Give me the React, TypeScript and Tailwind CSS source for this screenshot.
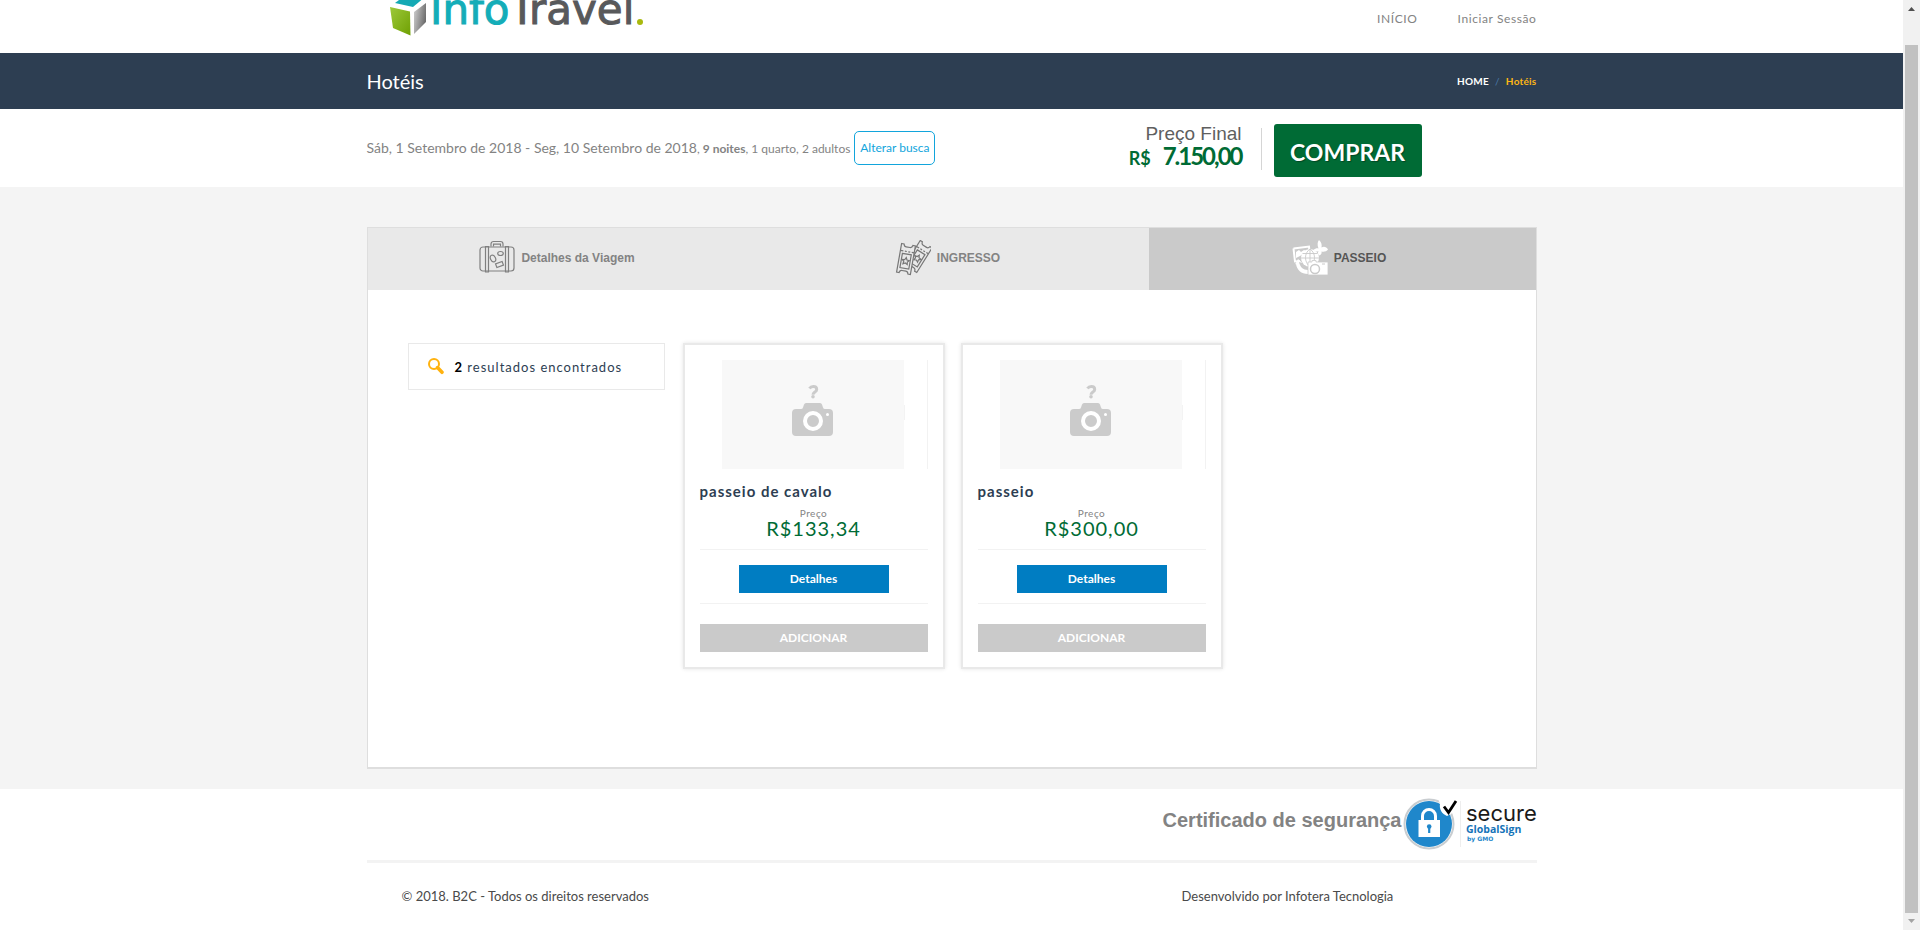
import React from "react";

const products = [
  { name: "passeio de cavalo", price: "R$133,34" },
  { name: "passeio", price: "R$300,00" },
];

function Logo() {
  return (
    <svg className="block" width="270" height="53" viewBox="0 0 270 53" role="img" aria-label="InfoTravel">
      <defs>
        <linearGradient id="cubeLeft" x1="0" y1="0" x2="1" y2="1">
          <stop offset="0" stopColor="#9dc93a" />
          <stop offset="1" stopColor="#6fa003" />
        </linearGradient>
        <linearGradient id="cubeRight" x1="0" y1="0" x2="1" y2="0.4">
          <stop offset="0" stopColor="#d2d2d2" />
          <stop offset="1" stopColor="#6e6e6e" />
        </linearGradient>
      </defs>
      <path d="M8 3 L20 -6 L38 -3 L26 7 Z" fill="#14a9b4" />
      <path d="M3 7 L23 11.500 L23.500 35.500 L6 28 Z" fill="url(#cubeLeft)" />
      <path d="M27 12 L39 3 L39 22 L27 34 Z" fill="url(#cubeRight)" />
      <text x="43" y="24" fontFamily="'DejaVu Sans', sans-serif" fontSize="42" strokeWidth="1">
        <tspan fill="#14adb8" stroke="#14adb8">Info</tspan>
        <tspan fill="#58595b" stroke="#58595b">Travel</tspan>
      </text>
      <circle cx="253" cy="22" r="3" fill="#a9b90e" />
    </svg>
  );
}

function SuitcaseIcon() {
  return (
    <svg width="36" height="36" viewBox="0 0 36 36" fill="none" stroke="#808080" strokeWidth="1.200" aria-hidden="true">
      <rect x="1" y="7" width="34" height="24" rx="3" />
      <path d="M6.500 6.500v25.500h3V6.500zM26.500 6.500v25.500h3V6.500z" />
      <path d="M12 6.500V4a2.500 2.500 0 0 1 2.500-2.500h7A2.500 2.500 0 0 1 24 4v2.500M14.500 6.500V4.200h7v2.300" />
      <ellipse cx="21.500" cy="13.500" rx="2.800" ry="2" />
      <ellipse cx="14" cy="18.500" rx="2.500" ry="3.500" transform="rotate(-25 14 18.500)" />
      <rect x="17" y="22.500" width="7" height="4" transform="rotate(-20 20.500 24.500)" />
    </svg>
  );
}

function TicketShape() {
  return (
    <>
      <path d="M-7-14.500q2 0 2.500 0 .5 2.500 2.500 2.500h4q2 0 2.500-2.500h2.500v29H4.500q-.5-2.500-2.500-2.500h-4q-2 0-2.500 2.500H-7z" fill="#e9e9e9" />
      <path d="M-7-7.500h3m1.500 0h2m1.500 0h2m1.500 0h2.500M-4.500-5h9v14.500h-9z" />
      <path d="M0-1.500l1.100 2.300 2.500.3-1.800 1.700.4 2.500L0 4.100l-2.200 1.200.4-2.500-1.800-1.700 2.500-.3z" />
    </>
  );
}

function TicketsIcon() {
  return (
    <svg width="36" height="36" viewBox="0 0 36 36" fill="none" stroke="#777" strokeWidth="1.200" aria-hidden="true">
      <g transform="translate(23.500 16.500) rotate(32)"><TicketShape /></g>
      <g transform="translate(11 19) rotate(10)"><TicketShape /></g>
    </svg>
  );
}

function TourIcon() {
  return (
    <svg width="36" height="36" viewBox="0 0 36 36" fill="none" aria-hidden="true">
      <path d="M1.500 8.500L17 6.500l.5 5.500M1.500 8.500L3 21.500l5-.5" stroke="#fff" strokeWidth="2" />
      <path d="M4 12l3-2 2 2 3-2 3 1-7 5-4 2z" fill="#fff" />
      <circle cx="18" cy="18" r="9" fill="#fff" />
      <path d="M9 18h18M10.500 13.500h15M18 9v18M18 9c-6 4-6 13 0 18M18 9c6 4 6 13 0 18" stroke="#cacaca" strokeWidth="0.900" />
      <path d="M26.500 8.500C25 5 25.500 1.500 27 0c2.500 2 3 5 2.500 7.500C31.500 6 34.500 6.500 36 9.500c-1.500 2-4 2.500-6.500 2 .5 2-.5 3.500-2.500 4-1-1.500-1.500-3-.5-4.500-2 1-4 .5-5-1 1.500-1.500 3.500-2 5-1.500z" fill="#fff" />
      <path d="M7 22c1 5 4 8 9 8v4C9 34 5 30 4 24l-1 .5L6 19l4.500 4z" fill="#fff" />
      <path d="M16 22h4v-1.500h4V22h12v13H16z" fill="#fff" stroke="#cacaca" strokeWidth="0.800" />
      <circle cx="23" cy="29" r="4.500" stroke="#cacaca" strokeWidth="1.500" />
      <path d="M30 24h3" stroke="#cacaca" />
    </svg>
  );
}

function SearchIcon() {
  return (
    <svg width="16" height="17" viewBox="0 0 16 17" fill="none" stroke="#ffb20f" aria-hidden="true">
      <circle cx="6" cy="6" r="5" strokeWidth="2" />
      <path d="M9.500 9.500l4.500 4.800" strokeWidth="3.500" strokeLinecap="round" />
    </svg>
  );
}

function NoPhoto() {
  return (
    <svg className="block" width="183" height="109" viewBox="0 0 183 109" role="img" aria-label="Sem foto">
      <rect width="182" height="109" fill="#f8f8f8" />
      <path d="M182.500 45v15" stroke="#f3f3f3" />
      <path d="M87.500 28.500c1-1.600 2.400-2 3.800-2 2.200 0 3.400 1.200 3.400 2.900 0 2.600-3.700 2.700-3.700 5.400" fill="none" stroke="#cbcbcb" strokeWidth="3" />
      <circle cx="91" cy="36.800" r="1.800" fill="#cbcbcb" />
      <path d="M74 49h5q1.500 0 2-1.500l1-3q.6-1.500 2-1.500h14q1.500 0 2 1.500l1 3q.5 1.500 2 1.500h4q4 0 4 4v19q0 4-4 4H74q-4 0-4-4V53q0-4 4-4z" fill="#cbcbcb" />
      <circle cx="91" cy="61" r="8" fill="none" stroke="#fff" strokeWidth="4" />
      <circle cx="105.500" cy="54.500" r="1.500" fill="#fff" />
    </svg>
  );
}

function SecureSeal() {
  return (
    <svg className="block" width="134" height="52" viewBox="0 0 134 52" role="img" aria-label="Secure GlobalSign by GMO">
      <circle cx="26" cy="26" r="24.500" fill="#fff" stroke="#c9cdd0" strokeWidth="2" />
      <circle cx="26" cy="26" r="23" fill="#1f87cb" />
      <path d="M35 0h18v13l-9 5c-5-2-8-7-7-12z" fill="#fff" />
      <path d="M41 8.500l4.500 6L53 3" fill="none" stroke="#000" strokeWidth="2.800" />
      <path d="M19.500 24v-6a6.500 6.500 0 0 1 13 0v6" fill="none" stroke="#fff" strokeWidth="3" />
      <rect x="15.500" y="22" width="21.500" height="17" fill="#fff" />
      <circle cx="26.200" cy="28.500" r="2.300" fill="#1f87cb" />
      <path d="M26.200 29v6" stroke="#1f87cb" strokeWidth="2.200" />
      <path d="M57.500 3v46" stroke="#eee" />
      <text x="63" y="23" fontFamily="Inter, sans-serif" fontSize="22" fill="#1a1a1a">secure</text>
      <text x="63" y="35" fontFamily="'Open Sans', sans-serif" fontWeight="700" fontSize="10.500" fill="#1573b8">GlobalSign</text>
      <text x="64" y="43" fontFamily="'DejaVu Sans', sans-serif" fontWeight="700" fontSize="6" fill="#1f87cb">by GMO</text>
    </svg>
  );
}

const tabClass = "flex h-[62px] cursor-pointer items-center justify-center gap-1.5 pb-0.5 pr-3 font-['Liberation_Sans',sans-serif] text-[12px] font-bold";

export default function App() {
  return (
    <div className="flex min-h-screen bg-white font-[Lato,sans-serif] text-[#838383]">
      <div className="flex min-w-0 flex-1 flex-col">
        <header className="mx-auto flex h-[53px] w-full max-w-[1170px] justify-between overflow-hidden">
          <a href="#" className="ml-5"><Logo /></a>
          <nav className="flex gap-10 pt-2.5 text-[12px] leading-[18px] tracking-wider">
            <a href="#">INÍCIO</a>
            <a href="#">Iniciar Sessão</a>
          </nav>
        </header>

        <div className="bg-[#2d3e52]">
          <div className="mx-auto flex h-14 max-w-[1170px] items-center justify-between">
            <h1 className="text-[20px] text-white">Hotéis</h1>
            <nav className="flex gap-1.5 text-[10px] font-bold tracking-wide">
              <a href="#" className="text-white">HOME</a>
              <span className="font-normal text-[#4a79a8]">/</span>
              <span className="text-[#fdb714]">Hotéis</span>
            </nav>
          </div>
        </div>

        <section className="mx-auto flex h-[78px] w-full max-w-[1170px]">
          <div className="flex flex-1 items-center gap-1">
            <p className="pb-0.5 text-[14px]">
              Sáb, 1 Setembro de 2018 - Seg, 10 Setembro de 2018<span className="text-[12px]">, <b>9 noites</b>, 1 quarto, 2 adultos</span>
            </p>
            <button className="h-[34px] w-[81px] cursor-pointer whitespace-nowrap rounded-[5px] border border-[#12a5dc] text-[12px] text-[#12a5dc]">Alterar busca</button>
          </div>
          <div className="mr-[115px] flex items-start pt-[15px]">
            <div className="pr-[19px] text-right">
              <p className="font-['Liberation_Sans',sans-serif] text-[19px] leading-5 text-[#5f5f5f]">Preço Final</p>
              <p className="flex items-baseline justify-end gap-3 font-bold leading-[24px] text-[#006b35]">
                <span className="text-[18px]">R$</span>
                <span className="text-[24px] tracking-[-2px]">7.150,00</span>
              </p>
            </div>
            <div className="mt-1 h-[42px] w-px bg-[#d5d5d5]" />
            <button className="ml-3 flex h-[53px] w-[148px] cursor-pointer items-center justify-center rounded-[3px] bg-[#006b35] pt-1 text-[23px] font-bold text-white [text-shadow:1px_1px_1px_#0005]">COMPRAR</button>
          </div>
        </section>

        <main className="bg-[#f4f4f4] pb-5 pt-10">
          <div className="mx-auto min-h-[542px] max-w-[1170px] border border-b-2 border-[#dedede] bg-white">
            <div role="tablist" className="grid grid-cols-[391fr_390fr_387fr] bg-[#e9e9e9]">
              <button role="tab" aria-selected={false} className={tabClass}><SuitcaseIcon />Detalhes da Viagem</button>
              <button role="tab" aria-selected={false} className={tabClass}><TicketsIcon />INGRESSO</button>
              <button role="tab" aria-selected={true} className="flex h-[62px] cursor-pointer items-center justify-center gap-1.5 bg-[#cacaca] pb-0.5 pr-1.5 font-['Liberation_Sans',sans-serif] text-[12px] font-bold text-[#555]"><TourIcon />PASSEIO</button>
            </div>
            <div className="flex items-start gap-[18px] px-10 pt-[53px]">
              <div className="flex h-[47px] w-[257px] items-center border border-[#e9e9e9] pl-[19px] text-[13px] tracking-[1px] text-[#2d3e52]">
                <SearchIcon />
                <h2 className="ml-[11px] pt-0.5"><b className="text-black">2</b> resultados encontrados</h2>
              </div>
              <div className="flex gap-4">
                {products.map((p) => (
                  <article key={p.name} className="w-[262px] border-2 border-[#e9e9e9] p-[15px] shadow-[0_0_4px_#e5e5e5]">
                    <div className="flex h-[109px] justify-center border-r border-[#f2f2f2]"><NoPhoto /></div>
                    <h3 className="mt-3 text-[15px] font-bold leading-5 tracking-[1px] text-[#2d3e52]">{p.name}</h3>
                    <p className="mt-[5px] text-center text-[10px] leading-[14px] tracking-wider">Preço</p>
                    <p className="text-center text-[20px] leading-4 tracking-[1px] text-[#006b35]">{p.price}</p>
                    <div className="mt-[13px] flex justify-center border-y border-[#f2f2f2] pb-2.5 pt-[15px]">
                      <button className="h-7 w-[150px] cursor-pointer bg-[#007dc2] text-[12px] font-bold text-white">Detalhes</button>
                    </div>
                    <button className="mt-5 block h-7 w-full cursor-pointer bg-[#cacaca] text-[12px] font-bold text-white">ADICIONAR</button>
                  </article>
                ))}
              </div>
            </div>
          </div>
        </main>

        <footer className="mx-auto w-full max-w-[1170px] text-[13px] text-[#4a4a4a]">
          <div className="flex h-[71px] items-start justify-end gap-px pt-[9px]">
            <p className="pt-2 font-['Liberation_Sans',sans-serif] text-[20px] font-bold leading-7 text-[#838383]">Certificado de segurança</p>
            <SecureSeal />
          </div>
          <div className="flex border-t-[3px] border-[#f3f3f3] pt-6 leading-[18px]">
            <p className="w-2/3 pl-[35px]">© 2018. B2C - Todos os direitos reservados</p>
            <p className="flex-1 pl-[35px]">Desenvolvido por Infotera Tecnologia</p>
          </div>
        </footer>
      </div>

      <div aria-hidden="true" className="flex w-[17px] shrink-0 flex-col items-center bg-[#f1f1f1]">
        <svg width="17" height="45" viewBox="0 0 17 45"><path d="M5 11h7L8.500 7z" fill="#505050" /></svg>
        <div className="w-[13px] flex-1 bg-[#c1c1c1]" />
        <svg width="17" height="17" viewBox="0 0 17 17"><path d="M5 6h7l-3.500 4z" fill="#a3a3a3" /></svg>
      </div>
    </div>
  );
}
